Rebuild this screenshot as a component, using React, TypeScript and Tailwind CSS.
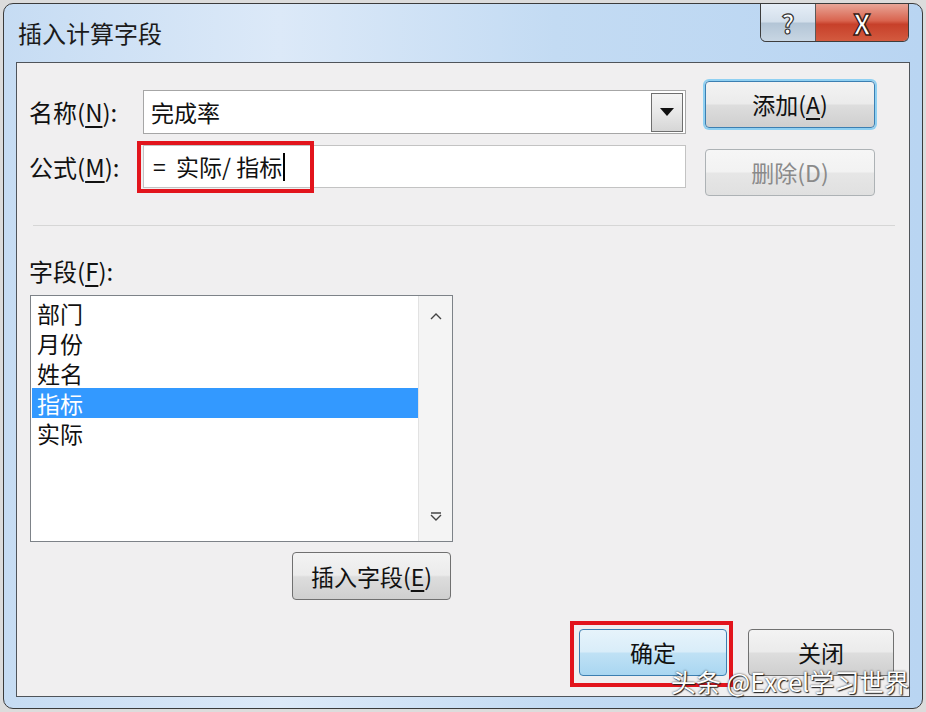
import React from "react";

const font = { fontFamily: '"Noto Sans CJK SC", "Noto Sans", sans-serif' };

const fields = ["部门", "月份", "姓名", "指标", "实际"];

function Btn({
  children,
  className = "",
  variant = "normal",
}: {
  children: React.ReactNode;
  className?: string;
  variant?: "normal" | "focus" | "default" | "disabled";
}) {
  const skin = {
    normal: "border-[#707070] bg-[linear-gradient(#f3f3f3_0%,#ebebeb_48%,#dddddd_52%,#cfcfcf_100%)] text-[#111]",
    focus:
      "border-[#3c7fb1] shadow-[0_0_0_2px_#8fd0f2] bg-[linear-gradient(#f3f3f3_0%,#ebebeb_48%,#dddddd_52%,#cfcfcf_100%)] text-[#111]",
    default: "border-[#3c7fb1] bg-[linear-gradient(#e6f3fb_0%,#d9edf9_48%,#bfe1f5_52%,#a9d6f1_100%)] text-[#111]",
    disabled: "border-[#adb2b5] bg-[linear-gradient(#f6f6f6_0%,#f2f2f2_48%,#e6e6e6_52%,#e0e0e0_100%)] text-[#8a8a8a]",
  }[variant];
  return (
    <div
      className={`flex items-center justify-center rounded-[4px] border text-[23px] leading-none ${skin} ${className}`}
    >
      {children}
    </div>
  );
}

export default function App() {
  return (
    <div className="relative h-[712px] w-[926px] overflow-hidden bg-[#dcdcdc] p-[3px]" style={font}>
      {/* window frame */}
      <div className="flex h-[706px] w-[920px] flex-col rounded-[10px] border border-[#3b3b3b] bg-[linear-gradient(90deg,#c6dcf3_0%,#dce9f8_30%,#c3dbf3_60%,#b9d5f2_100%)]">
        {/* title bar */}
        <div className="flex h-[58px] items-start justify-between">
          <div className="pl-[14px] pt-[14px] text-[24px] leading-[30px] text-[#1b1b1b]">插入计算字段</div>
          <div className="mr-[13px] flex h-[38px] overflow-hidden rounded-b-[6px] border border-t-0 border-[#3d3d3d]">
            <div className="flex w-[55px] items-center justify-center border-r border-[#5a5a5a] bg-[linear-gradient(#e6eef7_0%,#d3dfeb_48%,#b3c5d6_52%,#c8d6e3_100%)]">
              <span
                className="text-[26px] font-bold leading-none text-white"
                style={{ WebkitTextStroke: "1.2px #333" }}
              >
                ?
              </span>
            </div>
            <div className="flex w-[92px] items-center justify-center bg-[linear-gradient(#e8a597_0%,#d9644f_45%,#c7402a_55%,#d35a3f_100%)]">
              <span
                className="text-[28px] font-bold leading-none text-white"
                style={{ WebkitTextStroke: "1.4px #3a1a14" }}
              >
                X
              </span>
            </div>
          </div>
        </div>

        {/* client area */}
        <div className="relative mx-[12px] mb-[11px] flex-1 border border-[#4f545a] bg-[#f0eff0] text-[#111]">
          <div className="flex pt-[18px]">
            <div className="pt-[9px]">
              <div className="flex h-[44px] items-center">
                <div className="w-[126px] pl-[12px] text-[24px]">
                  名称(<span className="underline underline-offset-4">N</span>):
                </div>
                <div className="flex h-[44px] w-[543px] items-center border border-[#a6a6a6] bg-white pl-[7px] pr-[2px]">
                  <span className="flex-1 text-[23px]">完成率</span>
                  <div className="flex h-[39px] w-[32px] items-center justify-center border border-[#6f6f6f] bg-[linear-gradient(#f4f4f4_0%,#e8e8e8_50%,#d6d6d6_100%)]">
                    <svg width="14" height="8" viewBox="0 0 14 8">
                      <path d="M0 0h14L7 8z" fill="#111" />
                    </svg>
                  </div>
                </div>
              </div>
              <div className="mt-[11px] flex h-[43px] items-center">
                <div className="w-[126px] pl-[12px] text-[24px]">
                  公式(<span className="underline underline-offset-4">M</span>):
                </div>
                <div className="flex h-[43px] w-[543px] items-center border border-[#c3c3c3] bg-white pl-[9px] text-[23px]">
                  <span className="whitespace-pre">{"=  实际/ 指标"}</span>
                  <span className="ml-[1px] h-[28px] w-[2px] bg-black" />
                </div>
              </div>
            </div>
            <div className="ml-[19px] flex flex-col gap-[21px]">
              <Btn variant="focus" className="h-[47px] w-[170px]">
                添加(<span className="underline underline-offset-4">A</span>)
              </Btn>
              <Btn variant="disabled" className="h-[47px] w-[170px]">
                删除(D)
              </Btn>
            </div>
          </div>

          <div className="ml-[16px] mt-[29px] h-px w-[862px] bg-[#d6d6d6]" />

          <div className="ml-[12px] mt-[33px] h-[24px] text-[24px] leading-[24px]">
            字段(<span className="underline underline-offset-4">F</span>):
          </div>

          {/* list box */}
          <div className="ml-[13px] mt-[12px] flex h-[247px] w-[423px] border border-[#7d8288] bg-white">
            <div className="flex-1 pl-[1px] pt-[2px]">
              {fields.map((f, i) => (
                <div
                  key={f}
                  className={`flex h-[30px] items-center pl-[5px] text-[23px] leading-[30px] ${
                    i === 3 ? "bg-[#3399ff] text-white" : "text-[#111]"
                  }`}
                >
                  {f}
                </div>
              ))}
            </div>
            <div className="flex w-[34px] flex-col items-center justify-between border-l border-[#e2e2e2] bg-[#f4f4f4] pb-[20px] pt-[16px]">
              <svg width="12" height="8" viewBox="0 0 12 8">
                <path d="M1 7L6 2l5 5" fill="none" stroke="#444" strokeWidth="1.4" />
              </svg>
              <svg width="12" height="9" viewBox="0 0 12 9">
                <path d="M1 1h10M1 3l5 5 5-5" fill="none" stroke="#444" strokeWidth="1.4" />
              </svg>
            </div>
          </div>

          <Btn className="ml-[275px] mt-[10px] h-[48px] w-[159px]">
            插入字段(<span className="underline underline-offset-4">E</span>)
          </Btn>

          <div className="mr-[15px] mt-[29px] flex justify-end gap-[21px]">
            <Btn variant="default" className="h-[47px] w-[148px]">
              确定
            </Btn>
            <Btn className="h-[47px] w-[146px]">关闭</Btn>
          </div>

          {/* highlight boxes */}
          <div className="absolute left-[120px] top-[78px] h-[52px] w-[177px] border-[4px] border-[#e2141c]" />
          <div className="absolute left-[553px] top-[558px] h-[66px] w-[163px] border-[4px] border-[#e2141c]" />
        </div>
      </div>

      {/* watermark */}
      <div
        className="absolute left-[671px] top-[666px] text-[25px] leading-[30px] text-white"
        style={{ textShadow: "0 0 2px #222, 1px 1px 1px #222" }}
      >
        头条 @Excel学习世界
      </div>
    </div>
  );
}
